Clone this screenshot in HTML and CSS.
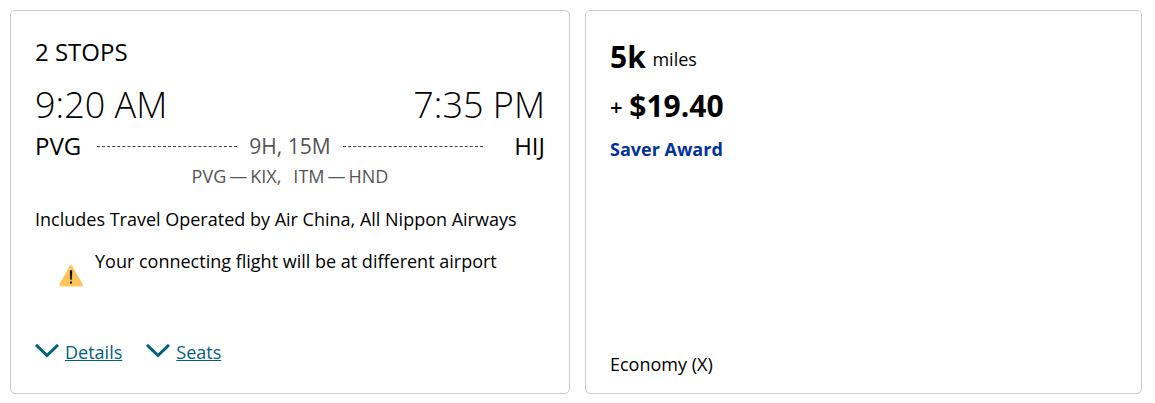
FILE: index.html
```html
<!DOCTYPE html>
<html lang="en">
<head>
    <meta charset="UTF-8">
    <meta name="viewport" content="width=device-width, initial-scale=1.0">
    <title>Flight Results</title>
    <link rel="stylesheet" href="styles.css">
</head>
<body>
    <main class="flight-row">
        <section class="card flight-card">
            <h2 class="stops">2 STOPS</h2>

            <div class="times">
                <span>9:20 AM</span>
                <span>7:35 PM</span>
            </div>

            <div class="route">
                <span class="airport">PVG</span>
                <span class="line"></span>
                <span class="duration">9H, 15M</span>
                <span class="line"></span>
                <span class="airport airport-end">HIJ</span>
            </div>

            <div class="segments">
                <span class="segment"><span>PVG</span><span>—</span><span>KIX,</span></span>
                <span class="segment"><span>ITM</span><span>—</span><span>HND</span></span>
            </div>

            <p class="operated">Includes Travel Operated by Air China, All Nippon Airways</p>

            <div class="notice">
                <svg class="warning-icon" viewBox="0 0 24 22" aria-hidden="true">
                    <path d="M12 2 L22 19.8 H2 Z" fill="#ffc55a" stroke="#ffc55a" stroke-width="3.4" stroke-linejoin="round"/>
                    <path d="M11 5.5 H13 L12.7 14.5 H11.3 Z" fill="#000" stroke="#000" stroke-width="0.3"/>
                    <rect x="11" y="16.5" width="2" height="2" fill="#000"/>
                </svg>
                <p>Your connecting flight will be at different airport</p>
            </div>

            <div class="links">
                <a href="#details">
                    <svg class="chevron" viewBox="0 0 24 14" aria-hidden="true"><path d="M1 1 L12 11.5 L23 1"/></svg>
                    <span>Details</span>
                </a>
                <a href="#seats">
                    <svg class="chevron" viewBox="0 0 24 14" aria-hidden="true"><path d="M1 1 L12 11.5 L23 1"/></svg>
                    <span>Seats</span>
                </a>
            </div>
        </section>

        <section class="card fare-card">
            <div class="miles"><strong>5k</strong> <span class="unit">miles</span></div>
            <div class="price"><span class="plus">+</span> <strong>$19.40</strong></div>
            <div class="award">Saver Award</div>
            <div class="cabin">Economy (X)</div>
        </section>
    </main>
</body>
</html>
```

FILE: styles.css
```css
* {
    box-sizing: border-box;
}
body {
    background: #fff;
    color: #000;
    font-family: "Open Sans", "Noto Sans", sans-serif;
    font-size: 18px;
    line-height: 24px;
    margin: 0;
    padding: 10px 13px 9px 10px;
}
h2,
p {
    margin: 0;
}
.flight-row {
    display: grid;
    grid-template-columns: 560fr 557fr;
    gap: 15px;
}
.card {
    border: 1px solid #ccc;
    border-radius: 5px;
    display: flex;
    flex-direction: column;
    padding: 24px 24px 17px;
}
.flight-card {
    padding-bottom: 29px;
}
.stops {
    font-size: 24px;
    font-weight: 400;
    line-height: 34px;
}
.times {
    display: flex;
    justify-content: space-between;
    font-size: 36px;
    font-weight: 300;
    line-height: 50px;
    margin-top: 11px;
}
.route {
    display: flex;
    align-items: center;
    line-height: 32px;
}
.airport {
    flex: none;
    font-size: 24px;
    width: 62px;
}
.airport-end {
    text-align: right;
}
.line {
    flex: 1;
    border-top: 1px dashed #444;
}
.duration {
    color: #555;
    font-size: 21px;
    margin: 0 12px;
}
.segments {
    display: flex;
    justify-content: center;
    gap: 12px;
    color: #555;
    margin-top: 2px;
}
.segment {
    display: flex;
    gap: 3px;
}
.operated {
    margin-top: 19px;
}
.notice {
    display: flex;
    gap: 12px;
    margin-top: 18px;
    padding-left: 24px;
}
.warning-icon {
    width: 24px;
    height: 22px;
    margin-top: 16px;
}
.links {
    display: flex;
    gap: 24px;
    margin-top: 53px;
}
.links a {
    display: flex;
    align-items: center;
    gap: 6px;
    color: #00607f;
    text-decoration: none;
}
.links span {
    text-decoration: underline;
}
.chevron {
    width: 24px;
    height: 14px;
    margin-bottom: 3px;
    fill: none;
    stroke: #00607f;
    stroke-width: 3;
}
.miles,
.price {
    line-height: 44px;
}
.miles strong,
.price strong {
    font-size: 30px;
}
.unit,
.plus {
    line-height: 1;
    vertical-align: 2px;
}
.unit {
    margin-left: 2px;
}
.plus {
    font-size: 22px;
    font-weight: 600;
    margin-right: 2px;
}
.price {
    margin-top: 1px;
}
.award {
    color: #003399;
    font-weight: 700;
    margin-top: 5px;
}
.cabin {
    margin-top: auto;
}
```
